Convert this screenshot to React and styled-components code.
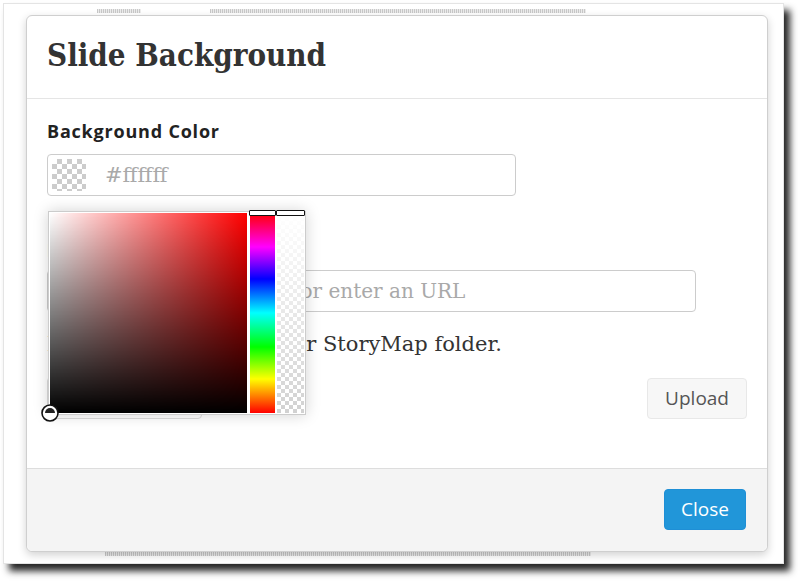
import React from 'react'
import styled, { createGlobalStyle } from 'styled-components'

const GlobalStyle = createGlobalStyle`
    html, body {
        margin: 0;
        padding: 0;
        background: #ffffff;
    }
    * {
        box-sizing: border-box;
    }
`;

const Stage = styled.div`
    width: 800px;
    height: 582px;
    padding: 3px 0 0 3px;
    overflow: hidden;
`;

const Frame = styled.div`
    position: relative;
    width: 781px;
    height: 561px;
    padding: 11px 0 0 22px;
    background: #ffffff;
    border: 1px solid #e4e4e4;
    box-shadow: 6px 7px 7px rgba(0, 0, 0, 0.85);
`;

// dithered strips that peek out from under the dialog
const Strip = styled.div`
    position: absolute;
    height: 4px;
    background: repeating-linear-gradient(90deg, #c8c8c8 0 1px, #ececec 1px 2px);
`;

const Modal = styled.div`
    position: relative;
    width: 742px;
    height: 537px;
    display: flex;
    flex-direction: column;
    background: #ffffff;
    border: 1px solid #cfcfcf;
    border-radius: 6px;
    box-shadow: 0 3px 9px rgba(0, 0, 0, 0.18);
`;

const Header = styled.div`
    height: 83px;
    display: flex;
    align-items: center;
    padding: 0 20px 4px;
    border-bottom: 1px solid #e5e5e5;
`;

const Title = styled.h1`
    margin: 0;
    font-family: "DejaVu Serif Condensed", "DejaVu Serif", serif;
    font-weight: bold;
    font-size: 31px;
    color: #333333;
`;

const Body = styled.div`
    flex: 1;
    padding: 19px 20px 0 20px;
    display: flex;
    flex-direction: column;
`;

const Label = styled.label`
    display: block;
    font-family: "Open Sans", sans-serif;
    font-weight: 700;
    font-size: 18px;
    letter-spacing: 0.8px;
    line-height: 26px;
    color: #222222;
`;

const ColorField = styled.div`
    position: relative;
    margin-top: 10px;
    width: 469px;
`;

const TextBox = styled.div`
    display: flex;
    align-items: center;
    height: 42px;
    padding: 0 4px;
    border: 1px solid #cccccc;
    border-radius: 4px;
    background: #ffffff;
    font-family: "DejaVu Serif", serif;
    font-size: ${p => p.size || 20}px;
    color: #a9a9a9;
    white-space: nowrap;
    overflow: hidden;
`;

const Checker = styled.div`
    background-color: #ffffff;
    background-image:
        linear-gradient(45deg, #cccccc 25%, transparent 25%, transparent 75%, #cccccc 75%),
        linear-gradient(45deg, #cccccc 25%, transparent 25%, transparent 75%, #cccccc 75%);
    background-size: ${p => p.cell * 2}px ${p => p.cell * 2}px;
    background-position: 0 0, ${p => p.cell}px ${p => p.cell}px;
`;

const Swatch = styled(Checker)`
    width: 34px;
    height: 32px;
    border-radius: 3px;
    margin-right: 19px;
`;

const Picker = styled.div`
    position: absolute;
    top: 57px;
    left: 1px;
    z-index: 5;
    width: 258px;
    height: 204px;
    display: flex;
    gap: 2px;
    padding: 1px;
    background: #ffffff;
    border: 1px solid #cccccc;
    box-shadow: 0 0 14px rgba(0, 0, 0, 0.18);
`;

const SatArea = styled.div`
    position: relative;
    width: 198px;
    height: 200px;
    margin-right: 1px;
    background:
        linear-gradient(to bottom, rgba(0, 0, 0, 0), #000000),
        linear-gradient(to right, #ffffff, #ff0000);
`;

const Handle = styled.svg`
    position: absolute;
    left: -10px;
    bottom: -10px;
`;

const Bar = styled.div`
    position: relative;
    width: ${p => p.w}px;
    height: 200px;
`;

const HueFill = styled.div`
    height: 100%;
    background: linear-gradient(to bottom, #ff0000, #ff00ff 17%, #0000ff 33%, #00ffff 50%, #00ff00 67%, #ffff00 83%, #ff0000);
`;

const AlphaFill = styled(Checker)`
    height: 100%;
    position: relative;
    &::after {
        content: '';
        position: absolute;
        inset: 0;
        background: linear-gradient(to bottom, #ffffff, rgba(255, 255, 255, 0.1));
    }
`;

const BarMarker = styled.div`
    position: absolute;
    top: -3px;
    left: -1px;
    right: -1px;
    height: 6px;
    z-index: 2;
    background: #ffffff;
    border: 1.5px solid #111111;
    border-radius: 1px;
`;

const ImageLabel = styled(Label)`
    margin-top: 41px;
`;

const UrlBox = styled(TextBox)`
    margin-top: 7px;
    width: 649px;
    padding-left: 14px;
`;

const Help = styled.p`
    margin: 20px 0 0;
    font-family: "DejaVu Serif", serif;
    font-size: 21px;
    color: #333333;
    white-space: nowrap;
`;

const UploadRow = styled.div`
    display: flex;
    justify-content: space-between;
    align-items: center;
    margin-top: 21px;
`;

const FileBox = styled.div`
    width: 155px;
    height: 42px;
    border: 1px solid #dddddd;
    border-radius: 4px;
`;

const Button = styled.button`
    height: 41px;
    padding: 0 ${p => p.primary ? 16 : 17}px;
    border-radius: 4px;
    border: 1px solid ${p => p.primary ? '#1f8fd6' : '#e8e8e8'};
    background: ${p => p.primary ? '#2196d9' : '#f7f7f7'};
    color: ${p => p.primary ? '#ffffff' : '#555555'};
    font-family: "Open Sans", sans-serif;
    font-size: 19px;
    cursor: pointer;
`;

const Footer = styled.div`
    height: 83px;
    display: flex;
    align-items: center;
    justify-content: flex-end;
    padding: 0 21px 2px;
    background: #f4f4f4;
    border-top: 1px solid #dddddd;
    border-radius: 0 0 6px 6px;
`;

const App = () => {
  return (
    <Stage>
      <GlobalStyle />
      <Frame>
        <Strip style={{ left: 93, top: 5, width: 44 }} />
        <Strip style={{ left: 206, top: 5, width: 376 }} />
        <Strip style={{ left: 101, top: 548, width: 486 }} />
        <Modal>
          <Header>
            <Title>Slide Background</Title>
          </Header>
          <Body>
            <Label>Background Color</Label>
            <ColorField>
              <TextBox size={21}>
                <Swatch cell={5} />
                #ffffff
              </TextBox>
              <Picker>
                <SatArea>
                  <Handle width="20" height="20" viewBox="0 0 20 20">
                    <circle cx="10" cy="10" r="8" fill="#ffffff" stroke="#111111" strokeWidth="1.6" />
                    <path d="M5 10 A5 5 0 0 1 15 10 Z" fill="#222222" />
                  </Handle>
                </SatArea>
                <Bar w={25}>
                  <BarMarker />
                  <HueFill />
                </Bar>
                <Bar w={27}>
                  <BarMarker />
                  <AlphaFill cell={4} />
                </Bar>
              </Picker>
            </ColorField>
            <ImageLabel>Background Image</ImageLabel>
            <UrlBox>Choose a file to upload or enter an URL</UrlBox>
            <Help>Images are saved to your StoryMap folder.</Help>
            <UploadRow>
              <FileBox />
              <Button>Upload</Button>
            </UploadRow>
          </Body>
          <Footer>
            <Button primary>Close</Button>
          </Footer>
        </Modal>
      </Frame>
    </Stage>
  );
};

export default App
